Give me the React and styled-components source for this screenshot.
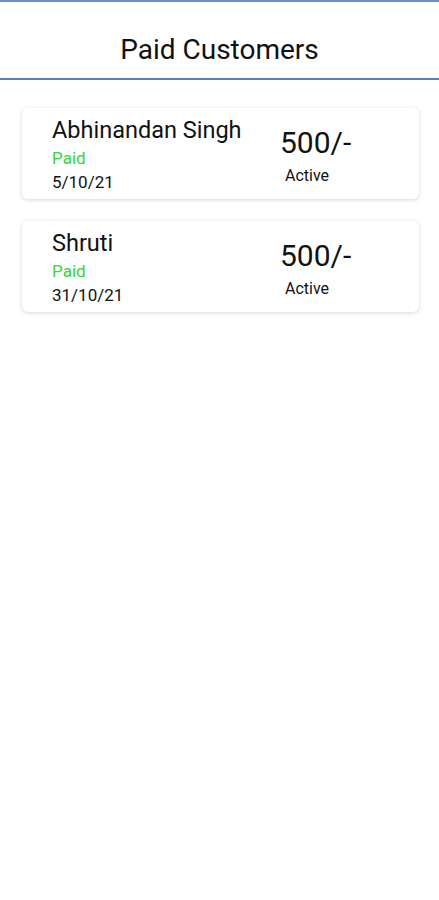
import React from 'react'
import styled, { createGlobalStyle } from 'styled-components'

const GlobalStyle = createGlobalStyle`
    body {
        margin: 0;
        background: #ffffff;
        font-family: Roboto, "Liberation Sans", sans-serif;
        color: #111111;
    }
`

const customers = [
    { name: 'Abhinandan Singh', status: 'Paid', date: '5/10/21', amount: '500/-', state: 'Active' },
    { name: 'Shruti', status: 'Paid', date: '31/10/21', amount: '500/-', state: 'Active' },
]

function App() {
  return (
    <Page>
        <GlobalStyle />
        <Header>
            <Title>Paid Customers</Title>
        </Header>
        <List>
            {customers.map((c) => (
                <Card key={c.name}>
                    <Info>
                        <Name>{c.name}</Name>
                        <Status>{c.status}</Status>
                        <DateText>{c.date}</DateText>
                    </Info>
                    <Amount>
                        <Price>{c.amount}</Price>
                        <State>{c.state}</State>
                    </Amount>
                </Card>
            ))}
        </List>
    </Page>
  )
}

export default App

const Page = styled.div`
    width: 439px;
    min-height: 900px;
    background: #ffffff;
`

const Header = styled.div`
    height: 76px;
    box-sizing: content-box;
    border-top: 2px solid #6f8ed0;
    border-bottom: 2px solid #5b7ec0;
    display: flex;
    align-items: flex-end;
    justify-content: center;
`

const Title = styled.div`
    font-size: 28px;
    line-height: 33px;
    padding-bottom: 12px;
    color: #111111;
`

const List = styled.div`
    display: flex;
    flex-direction: column;
    gap: 22px;
    padding: 28px 20px 0 22px;
`

const Card = styled.div`
    display: flex;
    height: 91px;
    box-sizing: border-box;
    border-radius: 6px;
    background: #ffffff;
    box-shadow: 0 1px 4px rgba(0, 0, 0, 0.16);
    padding: 8px 0 0 30px;
`

const Info = styled.div`
    width: 228px;
    display: flex;
    flex-direction: column;
`

const Name = styled.div`
    font-size: 23.5px;
    line-height: 28px;
    color: #111111;
    white-space: nowrap;
`

const Status = styled.div`
    font-size: 17px;
    line-height: 20px;
    margin-top: 4px;
    color: #3ad43a;
`

const DateText = styled.div`
    font-size: 17px;
    line-height: 20px;
    margin-top: 4px;
    color: #111111;
`

const Amount = styled.div`
    display: flex;
    flex-direction: column;
    padding-top: 10px;
`

const Price = styled.div`
    font-size: 30px;
    line-height: 34px;
    color: #111111;
`

const State = styled.div`
    font-size: 16px;
    line-height: 20px;
    margin-top: 6px;
    padding-left: 5px;
    color: #111111;
`
